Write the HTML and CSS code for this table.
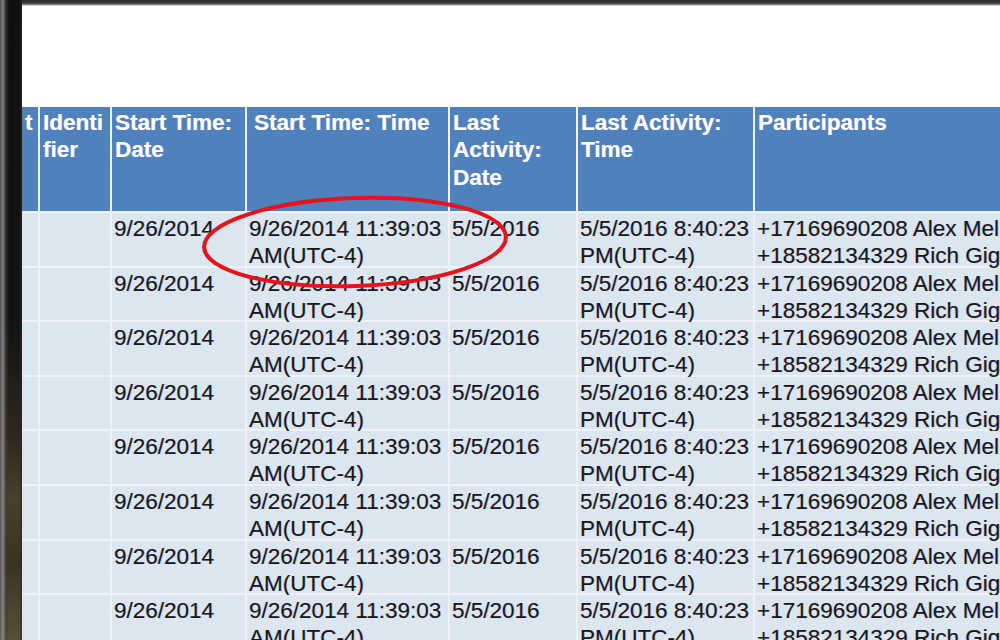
FILE: index.html
```html
<!DOCTYPE html>
<html>
<head>
<meta charset="utf-8">
<link rel="stylesheet" href="styles.css">
</head>
<body>
<div class="frame">
  <div class="edge"></div>
  <div class="main">
    <div class="topbar"></div>
    <div class="blank"></div>
    <div class="grid">
      <div class="th">t</div>
      <div class="th th-break">Identifier</div>
      <div class="th">Start Time: Date</div>
      <div class="th th-wide">Start Time: Time</div>
      <div class="th">Last Activity: Date</div>
      <div class="th">Last Activity: Time</div>
      <div class="th">Participants</div>

      <div class="td"></div><div class="td"></div><div class="td">9/26/2014</div><div class="td">9/26/2014 11:39:03 AM(UTC-4)</div><div class="td">5/5/2016</div><div class="td">5/5/2016 8:40:23 PM(UTC-4)</div><div class="td nw">+17169690208 Alex Mel<br>+18582134329 Rich Gig</div>
      <div class="td"></div><div class="td"></div><div class="td">9/26/2014</div><div class="td">9/26/2014 11:39:03 AM(UTC-4)</div><div class="td">5/5/2016</div><div class="td">5/5/2016 8:40:23 PM(UTC-4)</div><div class="td nw">+17169690208 Alex Mel<br>+18582134329 Rich Gig</div>
      <div class="td"></div><div class="td"></div><div class="td">9/26/2014</div><div class="td">9/26/2014 11:39:03 AM(UTC-4)</div><div class="td">5/5/2016</div><div class="td">5/5/2016 8:40:23 PM(UTC-4)</div><div class="td nw">+17169690208 Alex Mel<br>+18582134329 Rich Gig</div>
      <div class="td"></div><div class="td"></div><div class="td">9/26/2014</div><div class="td">9/26/2014 11:39:03 AM(UTC-4)</div><div class="td">5/5/2016</div><div class="td">5/5/2016 8:40:23 PM(UTC-4)</div><div class="td nw">+17169690208 Alex Mel<br>+18582134329 Rich Gig</div>
      <div class="td"></div><div class="td"></div><div class="td">9/26/2014</div><div class="td">9/26/2014 11:39:03 AM(UTC-4)</div><div class="td">5/5/2016</div><div class="td">5/5/2016 8:40:23 PM(UTC-4)</div><div class="td nw">+17169690208 Alex Mel<br>+18582134329 Rich Gig</div>
      <div class="td"></div><div class="td"></div><div class="td">9/26/2014</div><div class="td">9/26/2014 11:39:03 AM(UTC-4)</div><div class="td">5/5/2016</div><div class="td">5/5/2016 8:40:23 PM(UTC-4)</div><div class="td nw">+17169690208 Alex Mel<br>+18582134329 Rich Gig</div>
      <div class="td"></div><div class="td"></div><div class="td">9/26/2014</div><div class="td">9/26/2014 11:39:03 AM(UTC-4)</div><div class="td">5/5/2016</div><div class="td">5/5/2016 8:40:23 PM(UTC-4)</div><div class="td nw">+17169690208 Alex Mel<br>+18582134329 Rich Gig</div>
      <div class="td"></div><div class="td"></div><div class="td">9/26/2014</div><div class="td">9/26/2014 11:39:03 AM(UTC-4)</div><div class="td">5/5/2016</div><div class="td">5/5/2016 8:40:23 PM(UTC-4)</div><div class="td nw">+17169690208 Alex Mel<br>+18582134329 Rich Gig</div>
      <div class="td"></div><div class="td"></div><div class="td">9/26/2014</div><div class="td">9/26/2014 11:39:03 AM(UTC-4)</div><div class="td">5/5/2016</div><div class="td">5/5/2016 8:40:23 PM(UTC-4)</div><div class="td nw">+17169690208 Alex Mel<br>+18582134329 Rich Gig</div>
    </div>
  </div>
</div>
<svg class="mark" width="1000" height="640" viewBox="0 0 1000 640">
  <ellipse cx="355" cy="242" rx="151" ry="44" fill="none" stroke="#e8121b" stroke-width="4" transform="rotate(-2 355 242)"/>
</svg>
</body>
</html>
```

FILE: styles.css
```css
html, body {
  margin: 0;
  padding: 0;
  width: 1000px;
  height: 640px;
  overflow: hidden;
  background: #ffffff;
  font-family: "Liberation Sans", Arial, sans-serif;
}

.frame {
  display: flex;
  width: 1000px;
  height: 640px;
}

.edge {
  flex: 0 0 22px;
  height: 640px;
  background:
    linear-gradient(90deg, rgba(90,90,90,0.9) 0px, rgba(140,140,140,0.9) 3px, rgba(60,60,60,0.6) 6px, rgba(0,0,0,0) 9px, rgba(0,0,0,0) 19px, rgba(40,40,40,0.7) 22px),
    linear-gradient(180deg, #101010 0%, #121212 50%, #2e271c 68%, #4a3f2b 78%, #3a3222 88%, #5a4f38 100%);
}

.main {
  flex: 1 1 auto;
  min-width: 0;
  overflow: hidden;
  display: flex;
  flex-direction: column;
}

.topbar {
  height: 6px;
  flex: 0 0 6px;
  background: linear-gradient(180deg, #2a2a2a 0px, #3a3a3a 3px, #9a9a9a 5px, #ffffff 6px);
}

.blank {
  height: 101px;
  flex: 0 0 101px;
}

.grid {
  display: grid;
  grid-template-columns: 16px 70px 133px 201px 126px 175px 420px;
  grid-template-rows: 104px;
  grid-auto-rows: 52.6px;
  gap: 2px;
  background: #eef2f8;
  width: max-content;
}

.th {
  background: #4f81bd;
  color: #ffffff;
  font-weight: bold;
  font-size: 22.5px;
  line-height: 27.4px;
  padding: 2px 3px 0 3px;
  overflow: hidden;
  text-shadow: -0.7px 0 rgba(255, 120, 200, 0.45), 0.7px 0 rgba(120, 220, 255, 0.45);
}

.th-break {
  word-break: break-all;
}

.th-wide {
  padding-left: 7px;
}

.td {
  background: #dce6f1;
  color: #16161d;
  font-size: 22.5px;
  line-height: 27px;
  padding: 2px 2px 0 2px;
  text-shadow: -0.6px 0 rgba(200, 120, 40, 0.35), 0.6px 0 rgba(40, 110, 220, 0.35);
}

.nw {
  white-space: nowrap;
}

.mark {
  position: absolute;
  left: 0;
  top: 0;
  pointer-events: none;
}
```
